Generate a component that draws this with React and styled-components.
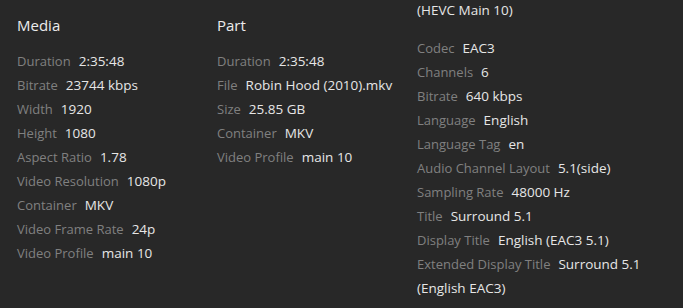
import React from "react";
import styled, { createGlobalStyle } from "styled-components";

const Global = createGlobalStyle`
  html, body { margin: 0; padding: 0; background: #282828; }
  body { font-family: "Open Sans", "Noto Sans", sans-serif; }
`;

const Page = styled.div`
  width: 683px;
  height: 308px;
  background: #282828;
  box-sizing: border-box;
  padding: 0 17px;
  display: grid;
  grid-template-columns: 200px 200px 1fr;
  overflow: hidden;
`;

const Column = styled.section`
  padding-top: ${(p) => (p.$scrolled ? "0" : "13px")};
`;

const Heading = styled.h2`
  margin: 0 0 12px;
  font-size: 15px;
  line-height: 24px;
  font-weight: 500;
  color: #ececec;
`;

const Overflow = styled.div`
  font-size: 13.5px;
  line-height: 20px;
  color: #e6e6e6;
  margin-bottom: 16px;
`;

const Row = styled.div`
  font-size: 13px;
  line-height: 24px;
  color: #e6e6e6;
`;

const Label = styled.span`
  color: #808080;
  margin-right: 8px;
`;

const Value = styled.span`
  font-size: 13.5px;
  color: #e6e6e6;
`;

const media = [
  ["Duration", "2:35:48"],
  ["Bitrate", "23744 kbps"],
  ["Width", "1920"],
  ["Height", "1080"],
  ["Aspect Ratio", "1.78"],
  ["Video Resolution", "1080p"],
  ["Container", "MKV"],
  ["Video Frame Rate", "24p"],
  ["Video Profile", "main 10"],
];

const part = [
  ["Duration", "2:35:48"],
  ["File", "Robin Hood (2010).mkv"],
  ["Size", "25.85 GB"],
  ["Container", "MKV"],
  ["Video Profile", "main 10"],
];

const audio = [
  ["Codec", "EAC3"],
  ["Channels", "6"],
  ["Bitrate", "640 kbps"],
  ["Language", "English"],
  ["Language Tag", "en"],
  ["Audio Channel Layout", "5.1(side)"],
  ["Sampling Rate", "48000 Hz"],
  ["Title", "Surround 5.1"],
  ["Display Title", "English (EAC3 5.1)"],
  ["Extended Display Title", "Surround 5.1 (English EAC3)"],
];

const Rows = ({ items }) =>
  items.map(([k, v]) => (
    <Row key={k}>
      <Label>{k}</Label>
      <Value>{v}</Value>
    </Row>
  ));

export default function App() {
  return (
    <>
      <Global />
      <Page>
        <Column>
          <Heading>Media</Heading>
          <Rows items={media} />
        </Column>
        <Column>
          <Heading>Part</Heading>
          <Rows items={part} />
        </Column>
        <Column $scrolled>
          <Overflow>(HEVC Main 10)</Overflow>
          <Rows items={audio} />
        </Column>
      </Page>
    </>
  );
}
